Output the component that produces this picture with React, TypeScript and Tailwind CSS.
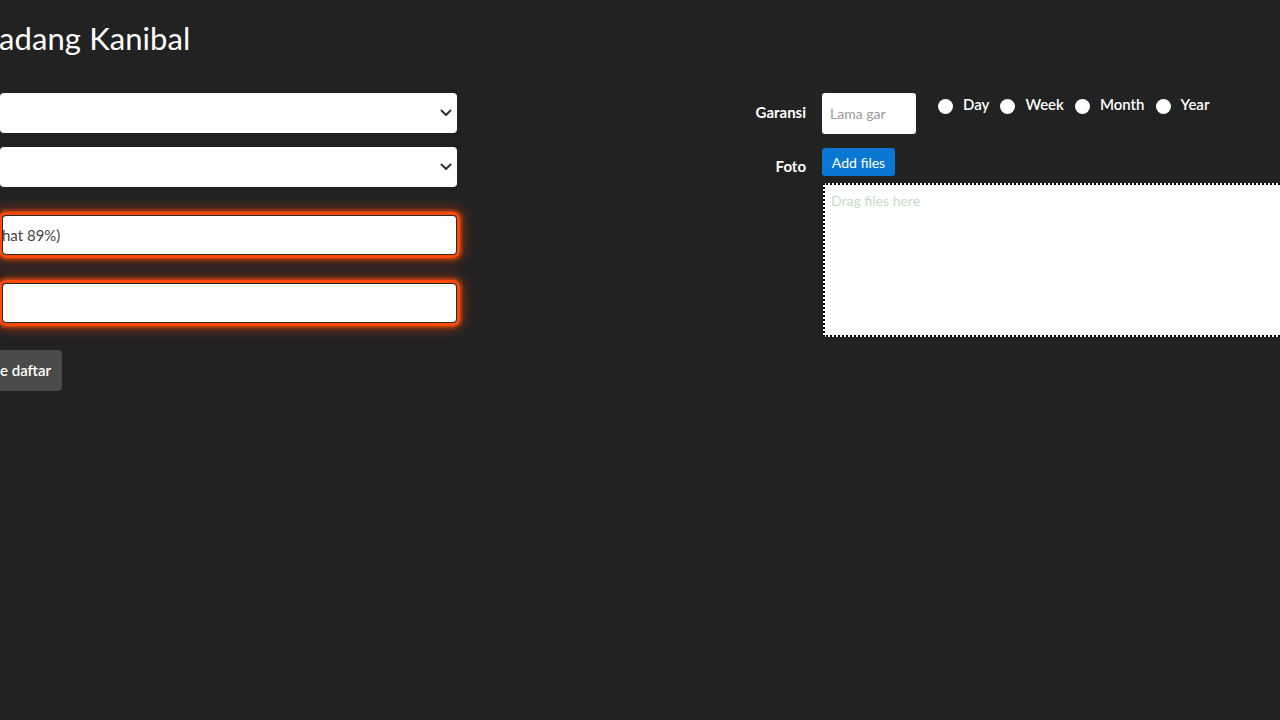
import React from "react";

const font = { fontFamily: "Lato, 'Open Sans', sans-serif" };

function Chevron() {
  return (
    <svg width="12" height="8" viewBox="0 0 12 8" className="absolute right-[5px] top-1/2 -translate-y-1/2">
      <path d="M1.5 1.5 L6 6 L10.5 1.5" fill="none" stroke="#333" strokeWidth="2" strokeLinecap="round" strokeLinejoin="round" />
    </svg>
  );
}

function SelectBox() {
  return (
    <div className="relative h-[40px] w-[457px] rounded-[4px] bg-white">
      <Chevron />
    </div>
  );
}

function GlowInput({ text }: { text?: string }) {
  return (
    <div className="w-[461px] rounded-[7px] border-[3px] border-[#ff4a0a] shadow-[0_0_4px_1px_rgba(255,80,10,0.9),0_0_12px_4px_rgba(255,70,0,0.35)]">
      <div className="flex h-[40px] items-center rounded-[4px] border border-[#2a2a2a] bg-white text-[15px] text-[#444]">
        {text && <span className="-ml-[1px] mt-[1px]">{text}</span>}
      </div>
    </div>
  );
}

function Radio({ label }: { label: string }) {
  return (
    <label className="flex items-center">
      <span className="mr-[10px] h-[15px] w-[15px] rounded-full bg-white" />
      <span className="mt-[-4px] text-[15px] font-semibold text-white">{label}</span>
    </label>
  );
}

export default function App() {
  return (
    <div className="min-h-[720px] w-[1280px] overflow-hidden bg-[#222222]" style={font}>
      <div className="flex">
        {/* left form column */}
        <div className="flex w-[740px] shrink-0 flex-col">
          <h1 className="ml-[-1px] mt-[18px] h-[40px] text-[31px] leading-[40px] tracking-[0.1px] text-white">adang Kanibal</h1>
          <div className="mt-[35px] flex flex-col gap-[14px]">
            <SelectBox />
            <SelectBox />
          </div>
          <div className="ml-[-1px] mt-[25px] flex flex-col gap-[22px]">
            <GlowInput text="hat 89%)" />
            <GlowInput />
          </div>
          <div className="mt-[24px]">
            <button className="ml-[-8px] h-[41px] rounded-[4px] bg-[#4a4a4a] pl-[8px] pr-[11px] text-[15px] font-semibold text-white">
              e daftar
            </button>
          </div>
        </div>

        {/* right form column */}
        <div className="mt-[93px] flex flex-1 flex-col">
          <div className="flex items-start">
            <div className="flex h-[39px] w-[66px] items-center justify-end text-[15px] font-bold text-white">Garansi</div>
            <div className="ml-[16px] flex h-[41px] w-[94px] items-center rounded-[3px] bg-white pl-[8px] text-[14px] text-[#9a9a9a]">
              Lama gar
            </div>
            <div className="ml-[22px] mt-[4px] flex items-center gap-[11px]">
              <Radio label="Day" />
              <Radio label="Week" />
              <Radio label="Month" />
              <Radio label="Year" />
            </div>
          </div>
          <div className="mt-[14px] flex items-start">
            <div className="mt-[7px] w-[66px] text-right text-[15px] font-bold text-white">Foto</div>
            <div className="ml-[16px] flex flex-1 flex-col">
              <button className="h-[28px] w-[73px] rounded-[3px] bg-[#0a78d2] text-[14px] text-white">Add files</button>
              <div className="ml-[1px] mt-[7px] h-[154px] w-[480px] rounded-[2px] border-2 border-dotted border-black bg-white px-[6px] pt-[5px] text-[14px] text-[#c6dcc8]">
                Drag files here
              </div>
            </div>
          </div>
        </div>
      </div>
    </div>
  );
}
